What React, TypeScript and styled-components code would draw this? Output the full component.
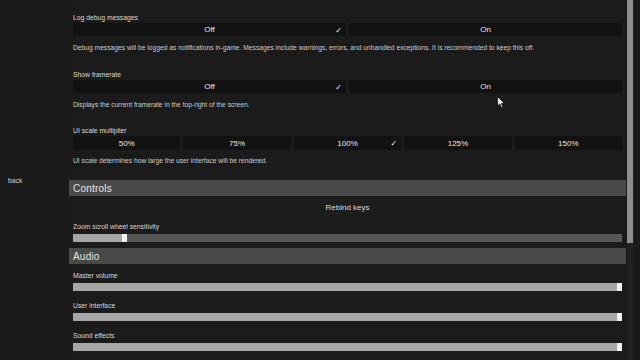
import styled, {createGlobalStyle} from "styled-components";

const GlobalStyle = createGlobalStyle`
  html, body {
    margin: 0;
    padding: 0;
    background: #1a1a1a;
    font-family: "Liberation Sans", Arial, sans-serif;
    color: #d8d8d8;
    overflow: hidden;
  }
`;

const Screen = styled.div`
  width: 640px;
  height: 360px;
  display: flex;
  position: relative;
  overflow: hidden;
  background: #1a1a1a;
`;

const Sidebar = styled.div`
  width: 69px;
  display: flex;
  align-items: center;
  padding-left: 8px;
  box-sizing: border-box;
  font-size: 6.8px;
  color: #d0d0d0;
`;

const Content = styled.div`
  width: 557px;
  display: flex;
  flex-direction: column;
  padding-top: 12px;
  background: #1b1b1b;
`;

const Scrollbar = styled.div`
  width: 7px;
  margin-left: 1px;
  background: #202020;
  display: flex;
  flex-direction: column;
`;

const Thumb = styled.div`
  width: 6px;
  height: 243px;
  background: #8e8e8e;
`;

const Setting = styled.div<{ $gap?: number }>`
  display: flex;
  flex-direction: column;
  padding: 0 4px;
  margin-bottom: ${p => p.$gap ?? 0}px;
`;

const Label = styled.div`
  font-size: 6.8px;
  line-height: 11px;
  height: 11px;
  color: #dadada;
`;

const Desc = styled.div<{ $mt: number }>`
  font-size: 6.7px;
  line-height: 10px;
  color: #cccccc;
  margin-top: ${p => p.$mt}px;
`;

const Options = styled.div`
  display: flex;
  gap: 3px;
`;

const Option = styled.div<{ $h: number }>`
  flex: 1;
  height: ${p => p.$h}px;
  background: #121212;
  display: flex;
  align-items: center;
  justify-content: center;
  position: relative;
  font-size: 8px;
  color: #e8e8e8;
`;

const Check = styled.span`
  position: absolute;
  right: 4px;
  top: 50%;
  transform: translateY(-50%);
  font-size: 8px;
  font-family: "DejaVu Sans", sans-serif;
  font-weight: bold;
  color: #f4f4f4;
`;

const Header = styled.div<{ $mt: number }>`
  height: 16px;
  margin-top: ${p => p.$mt}px;
  background: #494949;
  display: flex;
  align-items: center;
  padding-left: 4px;
  font-size: 10px;
  color: #e6e6e6;
  letter-spacing: 0.2px;
`;

const ActionButton = styled.div`
  margin: 3px 4px 0;
  height: 16px;
  background: #1d1d1d;
  display: flex;
  align-items: center;
  justify-content: center;
  font-size: 8px;
  color: #dcdcdc;
`;

const SliderBlock = styled.div<{ $mt: number }>`
  display: flex;
  flex-direction: column;
  padding: 0 4px;
  margin-top: ${p => p.$mt}px;
`;

const Track = styled.div`
  height: 8px;
  margin-top: 2px;
  background: #575757;
  display: flex;
`;

const Fill = styled.div`
  height: 100%;
  background: #a6a6a6;
`;

const Knob = styled.div`
  width: 5px;
  height: 100%;
  background: #f4f4f4;
`;

const Cursor = styled.svg`
  position: absolute;
  left: 497px;
  top: 96px;
`;

interface IChoice {
    text: string;
    selected?: boolean;
}

function Choices({ items, h }: { items: IChoice[]; h: number }) {
    return (
        <Options>
            {items.map(item => (
                <Option key={item.text} $h={h}>
                    {item.text}
                    {item.selected && <Check>✓</Check>}
                </Option>
            ))}
        </Options>
    );
}

function Slider({ label, value, mt }: { label: string; value: number; mt: number }) {
    return (
        <SliderBlock $mt={mt}>
            <Label>{label}</Label>
            <Track>
                <Fill style={{ width: `${value}%` }} />
                <Knob />
            </Track>
        </SliderBlock>
    );
}

function App() {
    const toggle: IChoice[] = [{ text: "Off", selected: true }, { text: "On" }];
    const scales: IChoice[] = [
        { text: "50%" },
        { text: "75%" },
        { text: "100%", selected: true },
        { text: "125%" },
        { text: "150%" },
    ];
    return (
        <Screen>
            <GlobalStyle />
            <Sidebar>back</Sidebar>
            <Content>
                <Setting $gap={16}>
                    <Label>Log debug messages</Label>
                    <Choices items={toggle} h={13} />
                    <Desc $mt={7}>
                        Debug messages will be logged as notifications in-game. Messages include warnings, errors, and unhandled exceptions. It is recommended to keep this off.
                    </Desc>
                </Setting>
                <Setting $gap={15}>
                    <Label>Show framerate</Label>
                    <Choices items={toggle} h={13} />
                    <Desc $mt={7}>Displays the current framerate in the top-right of the screen.</Desc>
                </Setting>
                <Setting>
                    <Label>UI scale multiplier</Label>
                    <Choices items={scales} h={14} />
                    <Desc $mt={6}>UI scale determines how large the user interface will be rendered.</Desc>
                </Setting>
                <Header $mt={14}>Controls</Header>
                <ActionButton>Rebind keys</ActionButton>
                <Slider label="Zoom scroll wheel sensitivity" value={9} mt={6} />
                <Header $mt={6}>Audio</Header>
                <Slider label="Master volume" value={99} mt={6} />
                <Slider label="User interface" value={99} mt={9} />
                <Slider label="Sound effects" value={99} mt={9} />
            </Content>
            <Scrollbar>
                <Thumb />
            </Scrollbar>
            <Cursor width="9" height="13" viewBox="0 0 9 13">
                <path d="M0.5 0.5 L0.5 10 L2.8 8 L4.5 12 L6 11.3 L4.4 7.5 L7.5 7.5 Z" fill="#eaeaea" stroke="#111" strokeWidth="0.8" />
            </Cursor>
        </Screen>
    );
}

export default App;
